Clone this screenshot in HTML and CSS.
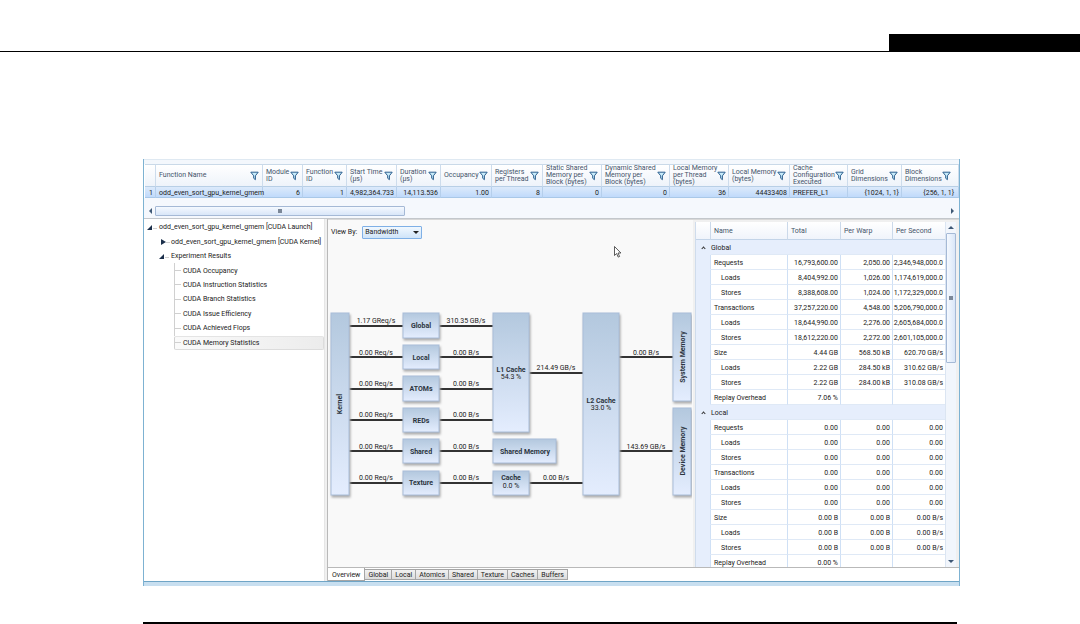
FILE: index.html
```
<!DOCTYPE html>
<html lang="en">
<head>
	<meta charset="UTF-8">
	<meta name="viewport" content="width=device-width, initial-scale=1">
	<title>CUDA Memory Statistics</title>
	<link rel="stylesheet" href="styles.css">
</head>
<body>
	<svg class="defs" width="0" height="0" aria-hidden="true">
		<symbol id="funnel" viewBox="0 0 9 10">
			<path d="M.8 1.2h7.4L5.4 4.8v3.9L3.7 7.3V4.8z" fill="#c8ecfb" stroke="#2c5f8e" stroke-width="1" stroke-linejoin="round"/>
		</symbol>
	</svg>

	<header class="page-head">
		<div class="page-tag"></div>
	</header>

	<main class="window">
		<div class="strip"></div>
		<table class="launches">
			<colgroup>
				<col class="w-num"><col class="w-name"><col class="w-module"><col class="w-func"><col class="w-start">
				<col class="w-dur"><col class="w-occ"><col class="w-occ"><col class="w-static"><col class="w-dyn">
				<col class="w-static"><col class="w-local"><col class="w-cache"><col class="w-grid"><col>
			</colgroup>
			<thead>
				<tr>
					<th></th>
					<th><div><span>Function Name</span><svg><use href="#funnel"/></svg></div></th>
					<th><div><span>Module<br>ID</span><svg><use href="#funnel"/></svg></div></th>
					<th><div><span>Function<br>ID</span><svg><use href="#funnel"/></svg></div></th>
					<th><div><span>Start Time<br>(µs)</span><svg><use href="#funnel"/></svg></div></th>
					<th><div><span>Duration<br>(µs)</span><svg><use href="#funnel"/></svg></div></th>
					<th><div><span>Occupancy</span><svg><use href="#funnel"/></svg></div></th>
					<th><div><span>Registers<br>per Thread</span><svg><use href="#funnel"/></svg></div></th>
					<th><div><span>Static Shared<br>Memory per<br>Block (bytes)</span><svg><use href="#funnel"/></svg></div></th>
					<th><div><span>Dynamic Shared<br>Memory per<br>Block (bytes)</span><svg><use href="#funnel"/></svg></div></th>
					<th><div><span>Local Memory<br>per Thread<br>(bytes)</span><svg><use href="#funnel"/></svg></div></th>
					<th><div><span>Local Memory<br>(bytes)</span><svg><use href="#funnel"/></svg></div></th>
					<th><div><span>Cache<br>Configuration<br>Executed</span><svg><use href="#funnel"/></svg></div></th>
					<th><div><span>Grid<br>Dimensions</span><svg><use href="#funnel"/></svg></div></th>
					<th><div><span>Block<br>Dimensions</span><svg><use href="#funnel"/></svg></div></th>
				</tr>
			</thead>
			<tbody>
				<tr>
					<td>1</td>
					<td class="left">odd_even_sort_gpu_kernel_gmem</td>
					<td>6</td>
					<td>1</td>
					<td>4,982,364.733</td>
					<td>14,113.536</td>
					<td>1.00</td>
					<td>8</td>
					<td>0</td>
					<td>0</td>
					<td>36</td>
					<td>44433408</td>
					<td class="left">PREFER_L1</td>
					<td>{1024, 1, 1}</td>
					<td>{256, 1, 1}</td>
				</tr>
			</tbody>
		</table>
		<div class="hscroll">
			<i class="arrow-left"></i>
			<div class="hthumb"><i class="grip"></i></div>
			<i class="arrow-right"></i>
		</div>

		<div class="content">
			<ul class="tree">
				<li class="l1"><i class="open"></i>odd_even_sort_gpu_kernel_gmem [CUDA Launch]</li>
				<li class="l2"><i class="closed"></i>odd_even_sort_gpu_kernel_gmem [CUDA Kernel]</li>
				<li class="l2"><i class="open"></i>Experiment Results</li>
				<li class="l3"><span>CUDA Occupancy</span></li>
				<li class="l3"><span>CUDA Instruction Statistics</span></li>
				<li class="l3"><span>CUDA Branch Statistics</span></li>
				<li class="l3"><span>CUDA Issue Efficiency</span></li>
				<li class="l3"><span>CUDA Achieved Flops</span></li>
				<li class="l3 selected"><span>CUDA Memory Statistics</span></li>
			</ul>

			<section class="pane">
				<div class="pane-main">
					<div class="overview">
						<div class="viewby">
							<label for="viewby">View By:</label>
							<div class="select">
								<select id="viewby">
									<option>Bandwidth</option>
								</select>
							</div>
						</div>
						<svg class="diagram" width="364" height="323">
							<defs>
								<linearGradient id="box" x1="0" y1="0" x2="0" y2="1">
									<stop offset="0" stop-color="#b3c8de"/>
									<stop offset="1" stop-color="#e4edfe"/>
								</linearGradient>
							</defs>
							<g class="lines">
								<path d="M21 82H75M111 82H165M21 113H75M111 113H165M21 145H75M111 145H165M21 176H75M111 176H165"/>
								<path d="M21 207H75M111 207H165M21 239H75M111 239H165M201 239H255M201 129H255M291 113H345M291 207H345"/>
							</g>
							<g class="boxes">
								<rect x="3" y="69" width="18" height="182"/>
								<rect x="75" y="69" width="36" height="25"/>
								<rect x="75" y="101" width="36" height="24"/>
								<rect x="75" y="132" width="36" height="25"/>
								<rect x="75" y="164" width="36" height="24"/>
								<rect x="75" y="195" width="36" height="24"/>
								<rect x="75" y="227" width="36" height="24"/>
								<rect x="165" y="69" width="36" height="119"/>
								<rect x="165" y="195" width="63" height="24"/>
								<rect x="165" y="227" width="36" height="24"/>
								<rect x="255" y="69" width="36" height="182"/>
								<rect x="345" y="69" width="18" height="88"/>
								<rect x="345" y="164" width="18" height="87"/>
							</g>
							<g class="names">
								<text x="93" y="84">Global</text>
								<text x="93" y="116">Local</text>
								<text x="93" y="147">ATOMs</text>
								<text x="93" y="179">REDs</text>
								<text x="93" y="210">Shared</text>
								<text x="93" y="241">Texture</text>
								<text x="183" y="128">L1 Cache</text>
								<text x="197" y="210">Shared Memory</text>
								<text x="183" y="236">Cache</text>
								<text x="273" y="159">L2 Cache</text>
								<text transform="translate(14 160) rotate(-90)">Kernel</text>
								<text transform="translate(357 113) rotate(-90)">System Memory</text>
								<text transform="translate(357 207) rotate(-90)">Device Memory</text>
							</g>
							<g class="rates">
								<text x="48" y="79">1.17 GReq/s</text>
								<text x="48" y="111">0.00 Req/s</text>
								<text x="48" y="142">0.00 Req/s</text>
								<text x="48" y="173">0.00 Req/s</text>
								<text x="48" y="205">0.00 Req/s</text>
								<text x="48" y="236">0.00 Req/s</text>
								<text x="138" y="79">310.35 GB/s</text>
								<text x="138" y="111">0.00 B/s</text>
								<text x="138" y="142">0.00 B/s</text>
								<text x="138" y="173">0.00 B/s</text>
								<text x="138" y="205">0.00 B/s</text>
								<text x="138" y="236">0.00 B/s</text>
								<text x="183" y="135">54.3 %</text>
								<text x="183" y="244">0.0 %</text>
								<text x="273" y="166">33.0 %</text>
								<text x="228" y="126">214.49 GB/s</text>
								<text x="228" y="236">0.00 B/s</text>
								<text x="318" y="111">0.00 B/s</text>
								<text x="318" y="205">143.69 GB/s</text>
							</g>
						</svg>
						<svg class="cursor" width="8" height="12" viewBox="0 0 8 12">
							<path d="M.5.5v9l2.1-2 1.6 3.6 1.4-.6-1.6-3.5h2.9z" fill="#fff" stroke="#333" stroke-width=".8"/>
						</svg>
					</div>

					<div class="details">
						<table class="stats">
							<colgroup><col class="s-gutter"><col><col class="s-total"><col class="s-rate"><col class="s-rate"></colgroup>
							<thead>
								<tr><th></th><th>Name</th><th>Total</th><th>Per Warp</th><th>Per Second</th></tr>
							</thead>
							<tbody>
								<tr class="group"><td><i class="caret"></i></td><td colspan="4">Global</td></tr>
								<tr><td></td><td>Requests</td><td>16,793,600.00</td><td>2,050.00</td><td>2,346,948,000.0</td></tr>
								<tr class="sub"><td></td><td>Loads</td><td>8,404,992.00</td><td>1,026.00</td><td>1,174,619,000.0</td></tr>
								<tr class="sub"><td></td><td>Stores</td><td>8,388,608.00</td><td>1,024.00</td><td>1,172,329,000.0</td></tr>
								<tr><td></td><td>Transactions</td><td>37,257,220.00</td><td>4,548.00</td><td>5,206,790,000.0</td></tr>
								<tr class="sub"><td></td><td>Loads</td><td>18,644,990.00</td><td>2,276.00</td><td>2,605,684,000.0</td></tr>
								<tr class="sub"><td></td><td>Stores</td><td>18,612,220.00</td><td>2,272.00</td><td>2,601,105,000.0</td></tr>
								<tr><td></td><td>Size</td><td>4.44 GB</td><td>568.50 kB</td><td>620.70 GB/s</td></tr>
								<tr class="sub"><td></td><td>Loads</td><td>2.22 GB</td><td>284.50 kB</td><td>310.62 GB/s</td></tr>
								<tr class="sub"><td></td><td>Stores</td><td>2.22 GB</td><td>284.00 kB</td><td>310.08 GB/s</td></tr>
								<tr><td></td><td>Replay Overhead</td><td>7.06 %</td><td></td><td></td></tr>
							</tbody>
							<tbody>
								<tr class="group"><td><i class="caret"></i></td><td colspan="4">Local</td></tr>
								<tr><td></td><td>Requests</td><td>0.00</td><td>0.00</td><td>0.00</td></tr>
								<tr class="sub"><td></td><td>Loads</td><td>0.00</td><td>0.00</td><td>0.00</td></tr>
								<tr class="sub"><td></td><td>Stores</td><td>0.00</td><td>0.00</td><td>0.00</td></tr>
								<tr><td></td><td>Transactions</td><td>0.00</td><td>0.00</td><td>0.00</td></tr>
								<tr class="sub"><td></td><td>Loads</td><td>0.00</td><td>0.00</td><td>0.00</td></tr>
								<tr class="sub"><td></td><td>Stores</td><td>0.00</td><td>0.00</td><td>0.00</td></tr>
								<tr><td></td><td>Size</td><td>0.00 B</td><td>0.00 B</td><td>0.00 B/s</td></tr>
								<tr class="sub"><td></td><td>Loads</td><td>0.00 B</td><td>0.00 B</td><td>0.00 B/s</td></tr>
								<tr class="sub"><td></td><td>Stores</td><td>0.00 B</td><td>0.00 B</td><td>0.00 B/s</td></tr>
								<tr><td></td><td>Replay Overhead</td><td>0.00 %</td><td></td><td></td></tr>
							</tbody>
						</table>
						<div class="vscroll">
							<i class="arrow-up"></i>
							<div class="vthumb"><i class="grip"></i></div>
							<i class="arrow-down"></i>
						</div>
					</div>
				</div>

				<nav class="tabs">
					<button class="active">Overview</button>
					<button>Global</button>
					<button>Local</button>
					<button>Atomics</button>
					<button>Shared</button>
					<button>Texture</button>
					<button>Caches</button>
					<button>Buffers</button>
				</nav>
			</section>
		</div>
	</main>

	<hr class="page-rule">
</body>
</html>
```
FILE: styles.css
```
*{
	box-sizing:border-box;
}
body{
	margin:0;
	background:#fff;
	color:#222;
	font:7px/8px Roboto,"Liberation Sans",sans-serif;
}
.defs{
	position:absolute;
}
table{
	width:100%;
	border-collapse:separate;
	border-spacing:0;
	table-layout:fixed;
}
th,td{
	padding:0;
	font-weight:normal;
	white-space:nowrap;
}

/* page header */
.page-head{
	display:flex;
	justify-content:flex-end;
	height:52px;
	padding-top:34px;
	border-bottom:1px solid #000;
}
.page-tag{
	width:191px;
	background:#000;
}
.page-rule{
	height:2px;
	margin:36px 123px 0 143px;
	border:0;
	background:#000;
}

/* window */
.window{
	margin:107px 120px 0 143px;
	border:1px solid #7db2d2;
	border-top:0;
	border-bottom:0;
	background:#f0f0f0;
}
.window::after{
	content:"";
	display:block;
	height:4px;
	border-top:1px solid #6fa5c6;
	background:#c8dff0;
}
.strip{
	height:5px;
	border-top:1px solid #dfe9f2;
	background:#f3f7fc;
}

/* launch list */
.launches{
	padding-left:1px;
	background:#fff;
}
.w-num{ width:11px; }
.w-name{ width:107px; }
.w-module{ width:40px; }
.w-func{ width:44px; }
.w-start{ width:50px; }
.w-dur{ width:44px; }
.w-occ{ width:51px; }
.w-static{ width:59px; }
.w-dyn{ width:68px; }
.w-local{ width:61px; }
.w-cache{ width:58px; }
.w-grid{ width:54px; }
.launches th{
	height:23px;
	border-top:1px solid #c9d9e8;
	border-right:1px solid #cddcec;
	border-bottom:1px solid #b8cfe6;
	background:linear-gradient(#fff,#eef3fa);
	color:#44546a;
	text-align:left;
	line-height:7px;
}
.launches th div{
	display:flex;
	align-items:center;
	justify-content:space-between;
	padding:0 3px 0 3px;
}
.launches th svg{
	flex:none;
	width:9px;
	height:10px;
}
.launches td{
	height:11px;
	padding:1px 2px 0 2px;
	border-right:1px solid #b5cfec;
	border-bottom:1px solid #a9c8e8;
	background:linear-gradient(#dceafb,#c0dafb);
	text-align:right;
}
.launches .left{
	text-align:left;
	padding-left:3px;
}
.launches th:last-child,.launches td:last-child{
	padding-right:4px;
}
.hscroll{
	display:flex;
	align-items:center;
	justify-content:space-between;
	gap:3px;
	height:21px;
	padding:5px 5px 0 5px;
	border-bottom:1px solid #c3c7cc;
	background:#f5f8fd;
}
.hthumb,.vthumb{
	display:flex;
	align-items:center;
	justify-content:center;
	border:1px solid #a5b9d6;
	border-radius:1px;
	background:linear-gradient(#f5f9ff,#d9e6f8);
}
.hthumb{
	width:250px;
	height:10px;
	margin-right:auto;
}
.grip{
	width:4px;
	height:4px;
	background:#7b8798;
}
.arrow-left,.arrow-right,.arrow-up,.arrow-down{
	border:3px solid transparent;
}
.arrow-left{ border-right-color:#3f5876; border-left-width:0; }
.arrow-right{ border-left-color:#3f5876; border-right-width:0; }
.arrow-up{ border-bottom-color:#3f5876; border-top-width:0; }
.arrow-down{ border-top-color:#3f5876; border-bottom-width:0; }

.content{
	display:flex;
}

/* tree */
.tree{
	flex:0 0 181px;
	min-width:0;
	display:grid;
	grid-template-rows:repeat(9,1fr);
	grid-template-columns:minmax(0,1fr);
	margin:0;
	padding:1px 0 231px 0;
	border-right:1px solid #e6e6e6;
	background:#fff;
	list-style:none;
}
.tree li{
	display:flex;
	align-items:center;
	white-space:nowrap;
}
.l1{ padding-left:3px; }
.l2{ padding-left:15px; }
.l3{ padding-left:30px; }
.l3 span{
	display:flex;
	align-items:center;
	flex:1;
	height:100%;
	border-left:1px solid #d0d0d0;
}
.l3 span::before{
	content:"";
	width:6px;
	height:1px;
	margin-right:2px;
	background:#d0d0d0;
}
.selected span{
	border-top:1px solid #e4e4e4;
	border-right:1px solid #dcdcdc;
	border-bottom:1px solid #dcdcdc;
	border-radius:2px;
	background:linear-gradient(90deg,#fafafa,#ececec);
}
.open,.closed{
	position:relative;
}
.open{
	margin-right:7px;
	border-left:5px solid transparent;
	border-bottom:5px solid #1b2f4b;
}
.closed{
	margin:0 5px 0 2px;
	border:3px solid transparent;
	border-left:5px solid #1b2f4b;
	border-right:0;
}
.open::after,.closed::after{
	content:"";
	position:absolute;
	top:0;
	left:0;
	width:4px;
	height:1px;
	background:#d0d0d0;
}
.open::after{
	top:3px;
	left:1px;
}

/* right side */
.pane{
	flex:1;
	min-width:0;
	margin-left:2px;
	border-left:1px solid #b9b9b9;
	background:#fff;
}
.pane-main{
	display:flex;
	border-top:1px solid #d8d8d8;
	border-bottom:1px solid #b9b9b9;
	background:#f0f0f0;
}
.overview{
	position:relative;
	flex:1;
	min-width:0;
	background:#f9f9f9;
}
.viewby{
	display:flex;
	align-items:center;
	gap:5px;
	height:24px;
	padding-left:3px;
}
.select{
	position:relative;
}
.select::after{
	content:"";
	position:absolute;
	top:5px;
	right:3px;
	border:3px solid transparent;
	border-top-color:#222;
	border-bottom:0;
	pointer-events:none;
}
.select select{
	display:block;
	width:60px;
	height:13px;
	padding:0 2px;
	appearance:none;
	border:1px solid #7fb0e6;
	border-radius:1px;
	background:linear-gradient(#f1f8fe,#cfe4f9);
	color:#222;
	font:inherit;
}
.diagram{
	display:block;
}
.lines{
	fill:none;
	stroke:#333;
	stroke-width:2;
}
.boxes{
	fill:url(#box);
	stroke:#a9bdd9;
	filter:drop-shadow(1px 2px 1px #aaa);
}
.names,.rates{
	fill:#222;
	text-anchor:middle;
}
.names{
	font-weight:bold;
	fill:#2b3440;
}
.cursor{
	position:absolute;
	left:286px;
	top:26px;
}

/* statistics */
.details{
	flex:0 0 264px;
	display:flex;
	align-items:flex-start;
	height:347px;
	margin-left:2px;
	padding-top:2px;
	overflow:hidden;
}
.stats{
	flex:1;
	width:0;
	border-left:1px solid #cfdcec;
	background:#fff;
}
.s-gutter{ width:15px; }
.s-total{ width:53px; }
.s-rate{ width:52px; }
.stats th{
	height:18px;
	padding:1px 0 0 3px;
	border-right:1px solid #cbd9ea;
	border-bottom:1px solid #c3d4e8;
	background:linear-gradient(#fff,#f0f4fb);
	color:#44546a;
	text-align:left;
}
.stats td{
	height:15px;
	padding:1px 2px 0 0;
	border-right:1px solid #cfe0f5;
	border-bottom:1px solid #dfe9f6;
	text-align:right;
}
.stats td:nth-child(1){
	border-bottom-color:#e6eefc;
	background:#e6eefc;
}
.stats td:nth-child(2){
	padding-left:3px;
	text-align:left;
}
.stats .sub td:nth-child(2){
	padding-left:10px;
}
.stats .group td{
	padding-left:0;
	border-right:0;
	background:#e6eefc;
}
.stats tr td:last-child,.stats th:last-child{
	border-right:0;
}
.caret{
	display:inline-block;
	width:3px;
	height:3px;
	margin:1px 4px 0 0;
	border:1px solid #333;
	border-right:0;
	border-bottom:0;
	transform:rotate(45deg);
}
.vscroll{
	flex:0 0 11px;
	display:flex;
	flex-direction:column;
	align-items:center;
	align-self:stretch;
	gap:4px;
	margin-right:3px;
	padding:4px 0;
	border-left:1px solid #dbe5f2;
	background:#f2f6fc;
}
.vthumb{
	width:10px;
	height:130px;
	margin-bottom:auto;
	background:linear-gradient(90deg,#f5f9ff,#d9e6f8);
}

/* tabs */
.tabs{
	display:flex;
	align-items:flex-start;
	height:13px;
}
.tabs button{
	height:11px;
	margin-top:1px;
	padding:1px 3px 0 3px;
	border:1px solid #a5a5a5;
	border-left:0;
	background:linear-gradient(#f2f2f2,#dcdcdc);
	color:#222;
	font:inherit;
}
.tabs .active{
	height:13px;
	margin-top:0;
	padding:1px 4px 0 4px;
	border-top:0;
	background:#fff;
}
```
